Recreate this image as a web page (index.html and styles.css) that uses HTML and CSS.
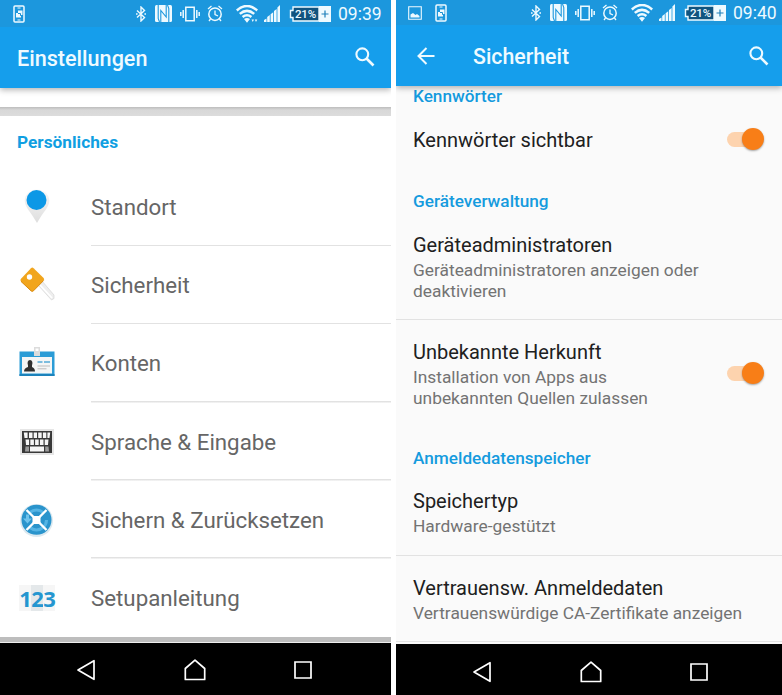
FILE: index.html
```
<!DOCTYPE html>
<html lang="de">
<head>
<meta charset="utf-8">
<title>Einstellungen</title>
<link rel="stylesheet" href="styles.css">
</head>
<body>
<svg class="defs" aria-hidden="true">
  <symbol id="note" viewBox="0 0 12 18"><rect x="1" y="1" width="10" height="16" rx="1" fill="none" stroke="currentColor" stroke-width="1.5"/><path d="M4.500 3h3M4.500 15h3" stroke="currentColor"/><path d="M5 5.500h4.500V10H8v2.500H3V8h2z" fill="currentColor"/><path d="M5 8.500h2.500v2.300" stroke="#1c8fd0" fill="none"/></symbol>
  <symbol id="bt" viewBox="0 0 10 16"><path d="M1 4.500l7.500 7L5 15V1l3.500 3.500L1 11.500" fill="none" stroke="currentColor" stroke-width="1.400"/><path d="M0 7.200h1.600v1.600H0zM8.400 7.200H10v1.600H8.400z" fill="currentColor"/></symbol>
  <symbol id="nfc" viewBox="0 0 17 17"><path d="M1.500 0H15.500Q17 0 17 1.500v14Q17 17 15.500 17H1.500Q0 17 0 15.500v-14Q0 0 1.500 0z" fill="currentColor"/><path d="M3.200 0v13.500l1.300 3.500M13.800 17V3.500L12.500 0M5.800 17V5.500l5.400 6.500V0" stroke="#1c97dd" stroke-width="1.100" fill="none"/></symbol>
  <symbol id="vib" viewBox="0 0 20 16"><path d="M5.800 1.300h8.400v13.400H5.800zM3.200 4v8M16.800 4v8M.8 6v4M19.200 6v4" fill="none" stroke="currentColor" stroke-width="1.500"/></symbol>
  <symbol id="alarm" viewBox="0 0 16 17"><circle cx="8" cy="9.200" r="6.200" fill="none" stroke="currentColor" stroke-width="1.500"/><path d="M1 4l3.500-3M15 4l-3.500-3M8 5.500v4l3 1.500M3.500 14L2 16M12.500 14l1.500 2" fill="none" stroke="currentColor" stroke-width="1.300"/></symbol>
  <symbol id="wifi" viewBox="0 0 22 18"><path d="M.8 5.500Q11-3.500 21.200 5.500M3.800 8.900q7.200-6 14.400 0M6.600 12q4.400-3.500 8.800 0" fill="none" stroke="currentColor" stroke-width="2.500"/><path d="M8 14q3-2.200 6 0l-3 3.800z" fill="currentColor"/></symbol>
  <symbol id="sig" viewBox="0 0 16 17"><path d="M0 17v-2l2.500-1.500V17zM3.200 17v-5l2.600-2v7zM6.600 17V9.300l2.600-2V17zM10 17V6l2.600-2v13zM13.400 17V2.500L16 0v17z" fill="currentColor"/></symbol>
  <symbol id="batt" viewBox="0 0 42 16"><path d="M4 1h26v14H4v-3.500H1.500v-7H4z" fill="#11547f" stroke="currentColor" stroke-width="1.400"/><path d="M30 0h12v16H30z" fill="currentColor"/><path d="M36 4.500v7M32.500 8h7" stroke="#1c7fba" stroke-width="1.200"/></symbol>
  <symbol id="search" viewBox="0 0 20 20"><circle cx="7.300" cy="7.300" r="5.900" fill="none" stroke="currentColor" stroke-width="2.100"/><path d="M11.500 11.500l7 7" stroke="currentColor" stroke-width="2.600"/></symbol>
  <symbol id="nback" viewBox="0 0 20 22"><path d="M18 1.700v18.600L2 11z" fill="none" stroke="currentColor" stroke-width="1.700" stroke-linejoin="round"/></symbol>
  <symbol id="nhome" viewBox="0 0 22 22"><path d="M1.300 20.500V9.500L11 1.200l9.700 8.300v11z" fill="none" stroke="currentColor" stroke-width="1.700" stroke-linejoin="round"/></symbol>
  <symbol id="nrec" viewBox="0 0 18 18"><path d="M1 1h16v16H1z" fill="none" stroke="currentColor" stroke-width="1.700"/></symbol>
</svg>

<main class="screens">
  <section class="phone phone-a">
    <header class="top">
      <div class="status">
        <svg class="i-note"><use href="#note"/></svg>
        <div class="tray">
          <svg class="i-bt"><use href="#bt"/></svg><svg class="i-nfc"><use href="#nfc"/></svg><svg class="i-vib"><use href="#vib"/></svg><svg class="i-alarm"><use href="#alarm"/></svg><svg class="i-wifi"><use href="#wifi"/><path d="M15.500 14.500h2.500l-1.200 2.500zM18.800 14.500h2.500L20 17z" fill="currentColor"/></svg><svg class="i-sig"><use href="#sig"/></svg>
          <span class="battery"><svg class="i-batt"><use href="#batt"/></svg><b class="pct">21%</b></span>
          <span class="clock">09:39</span>
        </div>
      </div>
      <div class="appbar"><h1>Einstellungen</h1><svg class="i-search"><use href="#search"/></svg></div>
    </header>
    <div class="prev"></div>
    <div class="band"></div>
    <h2 class="group">Persönliches</h2>
    <ul class="menu">
      <li><svg class="pic" viewBox="0 0 40 40"><defs><linearGradient id="g1" x2="0" y2="1"><stop offset="0" stop-color="#f8f8f8"/><stop offset="1" stop-color="#dedede"/></linearGradient></defs><path d="M20 2.500c7 0 12.300 5 12.300 11.200 0 6.300-6.300 11.300-12.300 22.300C14 25 7.700 20 7.700 13.700 7.700 7.500 13 2.500 20 2.500z" fill="url(#g1)"/><circle cx="19.500" cy="13" r="10" fill="#0c98e6"/></svg><span>Standort</span></li>
      <li><svg class="pic" viewBox="0 0 40 40"><path d="M21 20l4-4 12 14v3.500L34.500 35z" fill="#eee" stroke="#d5d5d5" stroke-width=".7"/><path d="M23 20l12 13" stroke="#fff" stroke-width="1.800"/><path d="M14 3.200q1.300-1.200 2.600 0l10 9.800q1.200 1.300 0 2.600L16.500 25.800q-1.300 1.200-2.600 0L4 16.400q-1.200-1.300 0-2.600z" fill="#f1a51d"/><path d="M4 16.400l10 9.400q1.200 1.200 2.500 0l10-10.200" fill="none" stroke="#d98a10"/><circle cx="12.500" cy="12" r="2.700" fill="#fff"/></svg><span>Sicherheit</span></li>
      <li><svg class="pic" viewBox="0 0 40 40"><path d="M2.500 8.500h35V33h-35z" fill="#2b9cd6"/><path d="M2.500 31h35v2h-35z" fill="#1c82bb"/><path d="M5 14h30v16.500H5z" fill="#f5f6f6"/><path d="M17 4h6v9h-6z" fill="#dcdcdc"/><path d="M18.500 5.500h3V8h-3z" fill="#fff"/><path d="M7 28.500q0-3.500 4-4.500v-1.500q-1.500-5 2-5.500 3.500.5 2 5.500V24q3 1 3 4.500z" fill="#303030"/><path d="M20.500 19h5M27 19h6" stroke="#55abd6" stroke-width="1.500"/><path d="M20.500 23h12.500M20.500 25.800h9" stroke="#bcbcbc"/></svg><span>Konten</span></li>
      <li><svg class="pic" viewBox="0 0 40 40"><path d="M3 7h34v26H3z" fill="#e6e6e6"/><path d="M5 9h30v22H5z" fill="#393939"/><path d="M6.800 10.500h3.800v5.500H7.500zM12 10.500h3.500v5.500H12zM16.700 10.500h3.300v5.500h-3.300zM21.200 10.500h3.500v5.500h-3.500zM25.900 10.500h3.400v5.500h-3.400zM30.400 10.500h2.800l-.7 5.500h-2.100zM8.500 17.500h3.600v5.500H9zM13.300 17.500h3.600v5.500h-3.600zM18.100 17.500h3.600v5.500h-3.600zM22.900 17.500h3.600v5.500h-3.600zM27.700 17.500h3.800l-.5 5.500h-3.300zM13 24.500h14v5H13z" fill="#f6f6f6"/><path d="M8.500 24.500H12v5H8zM28.200 24.500h3.300l.5 5h-3.800z" fill="#9b9b9b"/></svg><span>Sprache &amp; Eingabe</span></li>
      <li><svg class="pic" viewBox="0 0 40 40"><circle cx="19.500" cy="20.500" r="16.500" fill="#dce9f0"/><circle cx="19.500" cy="19.800" r="15" fill="#2a94cc"/><path d="M13 12.300a10 10 0 0 1 13 0M29.500 20a10 10 0 0 1-3.500 7.500M13 27.500a10 10 0 0 0 13 0" fill="none" stroke="#55b4e4" stroke-width="3"/><path d="M6 18.500h9l-4.500 5zM9 14.500h3v5H9z" fill="#6fc3ec"/><path d="M9.500 10l20 20M29.500 10l-20 20" stroke="#fff" stroke-width="2.400"/><path d="M16.500 16h6l1 1v6l-1 1h-6l-1-1v-6z" fill="#fff"/></svg><span>Sichern &amp; Zurücksetzen</span></li>
      <li><span class="pic digits"><i>1</i><i>2</i><i>3</i></span><span>Setupanleitung</span></li>
    </ul>
    <div class="edge"></div>
    <nav class="nav"><svg class="n-back"><use href="#nback"/></svg><svg class="n-home"><use href="#nhome"/></svg><svg class="n-rec"><use href="#nrec"/></svg></nav>
  </section>

  <section class="phone phone-b">
    <header class="top">
      <div class="status">
        <svg class="i-img" viewBox="0 0 14 14"><path d="M.7.700h12.600v12.600H.7z" fill="none" stroke="currentColor" stroke-width="1.100"/><path d="M2.500 11.500V8.500l2.500-1.500 2.500 2L9 8l2.500 2v1.500z" fill="currentColor"/></svg>
        <svg class="i-note"><use href="#note"/></svg>
        <div class="tray">
          <svg class="i-bt"><use href="#bt"/></svg><svg class="i-nfc"><use href="#nfc"/></svg><svg class="i-vib"><use href="#vib"/></svg><svg class="i-alarm"><use href="#alarm"/></svg><svg class="i-wifi"><use href="#wifi"/></svg><svg class="i-sig"><use href="#sig"/></svg>
          <span class="battery"><svg class="i-batt"><use href="#batt"/></svg><b class="pct">21%</b></span>
          <span class="clock">09:40</span>
        </div>
      </div>
      <div class="appbar"><svg class="i-arrow" viewBox="0 0 18 18"><path d="M17.500 9H2M9.500 1L1.500 9l8 8" fill="none" stroke="currentColor" stroke-width="2"/></svg><h1>Sicherheit</h1><svg class="i-search"><use href="#search"/></svg></div>
    </header>
    <div class="prefs">
      <h2 class="cat cut">Kennwörter</h2>
      <div class="pref single"><div><h3>Kennwörter sichtbar</h3></div><span class="switch"></span></div>
      <h2 class="cat">Geräteverwaltung</h2>
      <div class="pref first line h90"><div><h3>Geräteadministratoren</h3><p>Geräteadministratoren anzeigen oder<br>deaktivieren</p></div></div>
      <div class="pref h109"><div><h3>Unbekannte Herkunft</h3><p>Installation von Apps aus<br>unbekannten Quellen zulassen</p></div><span class="switch"></span></div>
      <h2 class="cat">Anmeldedatenspeicher</h2>
      <div class="pref first line h70"><div><h3>Speichertyp</h3><p>Hardware-gestützt</p></div></div>
      <div class="pref line h86"><div><h3>Vertrauensw. Anmeldedaten</h3><p>Vertrauenswürdige CA-Zertifikate anzeigen</p></div></div>
    </div>
    <nav class="nav"><svg class="n-back"><use href="#nback"/></svg><svg class="n-home"><use href="#nhome"/></svg><svg class="n-rec"><use href="#nrec"/></svg></nav>
  </section>
</main>
</body>
</html>
```
FILE: styles.css
```
* { box-sizing: border-box; margin: 0; padding: 0; }
body { width: 782px; height: 695px; overflow: hidden; background: #fff; font-family: Roboto, "Liberation Sans", sans-serif; }
svg { display: block; flex: none; }
.defs { position: absolute; width: 0; height: 0; }
.screens { display: flex; gap: 5px; height: 695px; }
.phone { display: flex; flex-direction: column; height: 695px; overflow: hidden; }
.phone-a { width: 391px; background: #fff; }
.phone-b { width: 386px; background: #fafafa; }

.top { position: relative; flex: none; color: #eefaff; background: #159eec; box-shadow: 0 2px 6px rgba(0,0,0,.3); }
.phone-a .top { height: 88px; }
.phone-b .top { height: 86px; }
.status { display: flex; align-items: center; background: #1c97dd; }
.phone-a .status { height: 27px; padding: 0 10px 0 13px; }
.phone-b .status { height: 25px; padding: 0 6px 0 12px; }
.tray { display: flex; align-items: center; width: 245px; margin-left: auto; }
.i-note { width: 12px; height: 18px; }
.i-img { width: 14px; height: 14px; margin-right: 13px; }
.i-bt { width: 10px; height: 16px; margin-right: 9px; }
.i-nfc { width: 17px; height: 17px; margin-right: 8px; }
.i-vib { width: 20px; height: 16px; margin-right: 7px; }
.i-alarm { width: 16px; height: 17px; margin-right: 13px; }
.i-wifi { width: 22px; height: 18px; margin-right: 6px; }
.i-sig { width: 16px; height: 17px; margin-right: 9px; }
.battery { position: relative; margin-right: 7px; }
.i-batt { width: 42px; height: 16px; }
.pct { position: absolute; left: 6px; top: 0; font-size: 11.500px; line-height: 16px; font-weight: 500; letter-spacing: -.2px; }
.clock { font-size: 17.500px; line-height: 26px; white-space: nowrap; }
.appbar { display: flex; align-items: center; height: 61px; padding: 0 16px 0 17px; }
.appbar h1 { padding-top: 2px; font-size: 21.600px; font-weight: 500; line-height: 30px; }
.phone-b .appbar h1 { padding-top: 3px; font-size: 21.300px; }
.i-search { width: 20px; height: 20px; margin-left: auto; }
.phone-a .i-search { margin-top: -1px; }
.phone-b .appbar { padding: 0 13px 0 21px; }
.i-arrow { width: 18px; height: 18px; margin-right: 38px; }

.prev { height: 19px; flex: none; }
.band { height: 9px; flex: none; background: linear-gradient(#bdbdbd, #d8d8d8 3px, #dcdcdc); }
.group { flex: none; height: 52px; padding: 0 17px; font-size: 17.300px; line-height: 53px; font-weight: 700; color: #109fe2; }
.menu { list-style: none; flex: none; }
.menu li { display: flex; align-items: center; height: 78.200px; font-size: 22.300px; color: #666; background: linear-gradient(#e2e2e2, #e2e2e2) 91px 100% / 300px 1.500px no-repeat; }
.menu li:last-child { height: 78px; background: none; }
.pic { width: 40px; height: 40px; margin: 0 34px 0 17px; flex: none; }
.digits { display: flex; align-items: center; padding: 0 2px; }
.digits i { width: 12px; height: 26px; font: 700 22px/27px "Open Sans", Roboto, sans-serif; text-align: center; letter-spacing: -1px; color: #2596d0; background: #f6f6f6; }
.digits i:nth-child(2) { background: #e4e8ea; }
.edge { flex: 1; background: #bdbdbd; border-bottom: 1px solid #eee; }

.nav { display: flex; align-items: center; flex: none; color: #fff; background: #000; }
.phone-a .nav { height: 52px; padding: 2px 0 0 76px; }
.phone-b .nav { height: 51px; margin-top: auto; padding: 4px 0 0 76px; }
.n-back { width: 20px; height: 22px; margin-right: 88px; }
.n-home { width: 22px; height: 22px; margin-right: 88px; }
.n-rec { width: 18px; height: 18px; }

.cat { height: 57px; padding-left: 17px; font-size: 17.200px; line-height: 58px; font-weight: 500; color: #159bde; }
.cat.cut { height: 22px; line-height: 21px; }
.pref { display: flex; justify-content: space-between; padding: 20px 18px 0 17px; }
.pref.first { padding-top: 4px; }
.pref.single { height: 64px; padding-top: 20px; }
.pref h3 { font-size: 20px; line-height: 24px; font-weight: 400; color: #202020; white-space: nowrap; }
.pref p { margin-top: 3px; font-size: 17.350px; line-height: 20.500px; color: #737373; white-space: nowrap; }
.line { border-bottom: 1.500px solid #e2e2e2; }
.h90 { height: 91px; }
.h109 { height: 109px; }
.h70 { height: 70px; }
.h70.first { padding-top: 3px; }
.h86 { height: 86px; }
.switch { position: relative; width: 37px; height: 24px; flex: none; }
.h109 .switch { margin-top: 22px; }
.switch::before { content: ""; position: absolute; left: 0; top: 4px; width: 32px; height: 15px; border-radius: 8px; background: #fdd3ae; }
.switch::after { content: ""; position: absolute; right: 0; top: 0; width: 22px; height: 22px; border-radius: 50%; background: #f87e17; box-shadow: 0 1px 2px rgba(0,0,0,.35); }
```
